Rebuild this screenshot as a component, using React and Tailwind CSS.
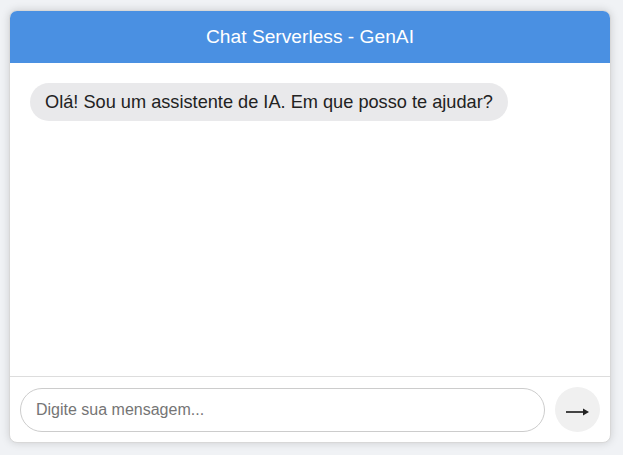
export default function App() {
  return (
    <div className="min-h-[455px] w-full bg-[#f0f2f5] pl-[9px] pt-[10px] font-['Liberation_Sans',Arial,sans-serif]">
      <div className="flex h-[433px] w-[602px] flex-col overflow-hidden rounded-lg bg-white shadow-[0_0_8px_rgba(0,0,0,0.15)] border border-[#d8d8d8]">
        <div className="flex h-[52px] shrink-0 items-center justify-center bg-[#4a90e2] text-[19.2px] text-white">
          Chat Serverless - GenAI
        </div>
        <div className="flex-1 p-5">
          <div className="inline-block rounded-[19px] bg-[#e9e9eb] px-[15px] py-[10px] text-[18.2px] leading-[18px] text-[#222]">
            Olá! Sou um assistente de IA. Em que posso te ajudar?
          </div>
        </div>
        <div className="flex items-center gap-[10px] border-t border-[#dddddd] p-[10px]">
          <input
            type="text"
            placeholder="Digite sua mensagem..."
            className="h-[44px] flex-1 rounded-full border border-[#cccccc] px-[15px] text-[16px] outline-none placeholder:text-[#757575]"
          />
          <button className="flex h-[45px] w-[45px] items-center justify-center rounded-full bg-[#f0f0f0] pt-[5px] text-[#333]">
            <svg width="24" height="10" viewBox="0 0 24 10">
              <path d="M0 5h21" stroke="#444" strokeWidth="2" />
              <path d="M17 1.5L23 5l-6 3.5z" fill="#222" />
            </svg>
          </button>
        </div>
      </div>
    </div>
  );
}
